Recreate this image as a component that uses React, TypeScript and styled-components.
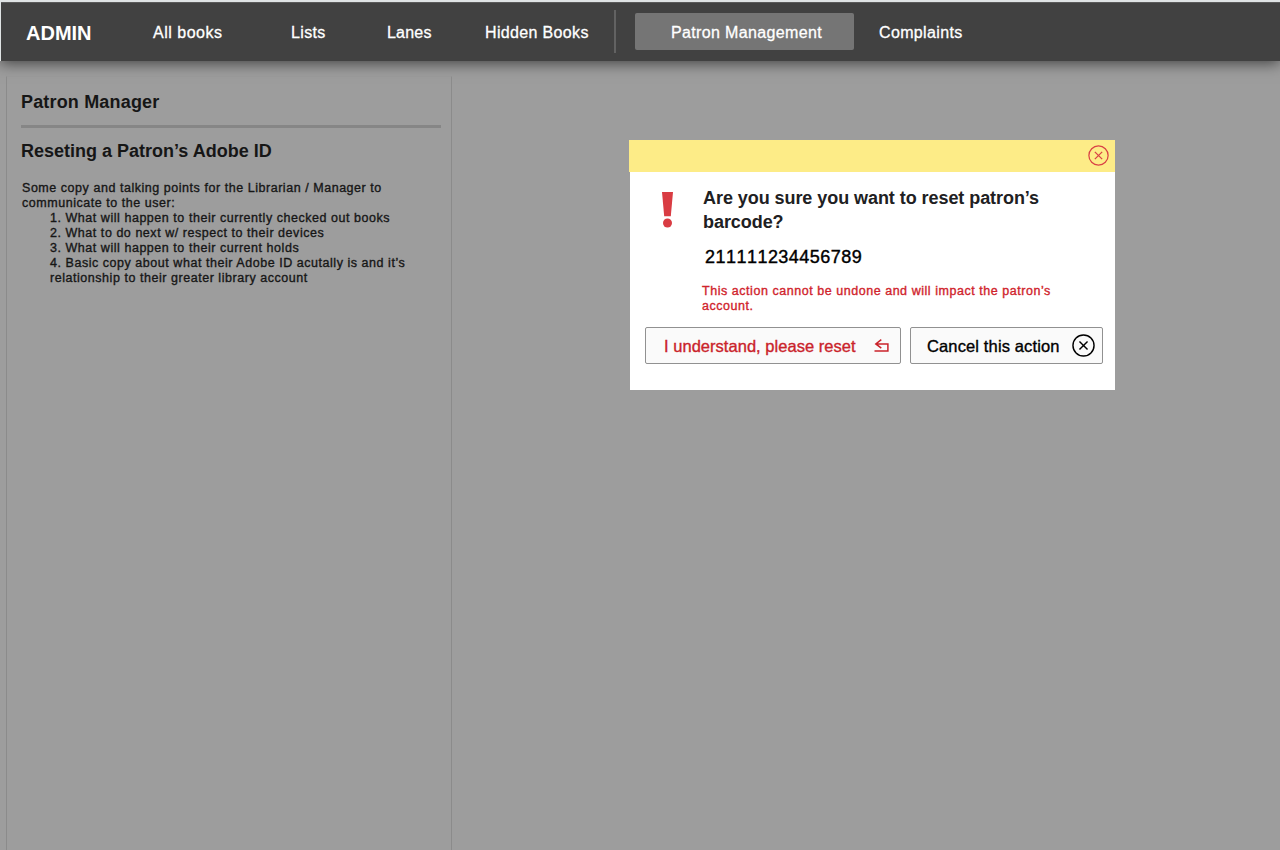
import React from "react";
import styled, { createGlobalStyle } from "styled-components";

const GlobalStyle = createGlobalStyle`
  * { box-sizing: border-box; }
  html, body { margin: 0; height: 850px; overflow: hidden; }
  body {
    background: #9d9d9d;
    color: #161616;
    font-family: "Liberation Sans", Arial, sans-serif;
  }
  h1, h2, p, ol { margin: 0; padding: 0; font-weight: inherit; }
  button { font-family: inherit; }
`;

const Page = styled.div`
  display: flex;
  flex-direction: column;
  width: 1280px;
  height: 850px;
  overflow: hidden;
`;

const TopStrip = styled.div`
  height: 61px;
  flex: none;
  padding: 2px 0 0 1px;
  background: #dfe3e4;
  box-shadow: 0 2px 14px rgba(0, 0, 0, 0.6);
`;

const Header = styled.header`
  display: flex;
  align-items: flex-start;
  height: 59px;
  border-top: 1px solid #5a5a5a;
  background: #414141;
  color: #fff;
`;

const Brand = styled.div`
  width: 127px;
  padding-left: 25px;
  font-size: 20px;
  font-weight: 700;
  line-height: 60px;
`;

const NavItem = styled.a<{ $width: number; $spacing?: number }>`
  width: ${(p) => p.$width}px;
  padding-left: 25px;
  font-size: 16px;
  line-height: 59px;
  white-space: nowrap;
  letter-spacing: ${(p) => p.$spacing ?? 0.35}px;
  -webkit-text-stroke: 0.3px currentColor;
`;

const ActiveNavItem = styled(NavItem)`
  height: 37px;
  margin-top: 10px;
  padding-left: 36px;
  border-radius: 2px;
  background: #757575;
  line-height: 39px;
`;

const Divider = styled.div`
  width: 2px;
  height: 43px;
  margin: 7px 19px 0 0;
  background: #626262;
`;

const Main = styled.main`
  display: flex;
  flex: 1;
  align-items: flex-start;
  padding-left: 6px;
`;

const Panel = styled.section`
  width: 446px;
  height: 789px;
  margin-top: 15px;
  padding: 15px 10px 0 14px;
  border: 1px solid #8b8b8b;
  border-top-color: #989898;
`;

const PanelTitle = styled.h1`
  height: 36px;
  border-bottom: 3px solid #868686;
  font-size: 18px;
  font-weight: 700;
  line-height: 20px;
  letter-spacing: 0.17px;
`;

const SectionTitle = styled.h2`
  margin-top: 13px;
  font-size: 18px;
  font-weight: 700;
  line-height: 20px;
`;

const Copy = styled.div`
  margin-top: 20px;
  padding-left: 1px;
  font-size: 12.5px;
  line-height: 15px;
  letter-spacing: 0.54px;
  white-space: nowrap;
  -webkit-text-stroke: 0.35px currentColor;
`;

const Points = styled.ol`
  padding-left: 28px;
  list-style: none;
`;

const Dialog = styled.section`
  display: flex;
  flex-direction: column;
  align-items: flex-end;
  width: 486px;
  height: 250px;
  margin: 79px 0 0 177px;
`;

const DialogBar = styled.div`
  display: flex;
  justify-content: flex-end;
  align-items: flex-start;
  width: 486px;
  height: 32px;
  padding: 5px 6px 0 0;
  background: #fdec87;
  color: #d94145;
`;

const DialogBody = styled.div`
  width: 485px;
  height: 218px;
  background: #fff;
`;

const Message = styled.div`
  display: flex;
  height: 155px;
  padding: 14px 0 0 32px;
`;

const Alert = styled.svg`
  width: 11px;
  height: 36px;
  margin: 6px 29px 0 0;
`;

const Question = styled.h2`
  padding-left: 1px;
  color: #202022;
  font-size: 18px;
  font-weight: 700;
  line-height: 24px;
  letter-spacing: -0.06px;
  white-space: nowrap;
`;

const Barcode = styled.p`
  margin-top: 12px;
  padding-left: 3px;
  color: #000;
  font-size: 18px;
  font-kerning: none;
  line-height: 22px;
  letter-spacing: 0.47px;
  -webkit-text-stroke: 0.4px currentColor;
`;

const Warning = styled.p`
  margin-top: 16px;
  color: #d0232c;
  font-size: 12.5px;
  line-height: 15px;
  letter-spacing: 0.54px;
  white-space: nowrap;
  -webkit-text-stroke: 0.35px currentColor;
`;

const Actions = styled.div`
  display: flex;
  gap: 9px;
  padding-left: 15px;
`;

const ActionButton = styled.button<{ $width: number; $danger?: boolean }>`
  display: flex;
  justify-content: space-between;
  align-items: center;
  width: ${(p) => p.$width}px;
  height: 37px;
  padding: ${(p) => (p.$danger ? "0 11px 0 18px" : "0 7px 0 16px")};
  border: 1px solid #919191;
  border-radius: 2px;
  background: #fafafa;
  color: ${(p) => (p.$danger ? "#ca232b" : "#000")};
  font-size: 16.5px;
  line-height: 35px;
  letter-spacing: ${(p) => (p.$danger ? 0.03 : 0.13)}px;
  white-space: nowrap;
  -webkit-text-stroke: 0.35px currentColor;
`;

const ButtonLabel = styled.span`
  padding-top: 2px;
`;

const CircledCross = ({ size, weight }: { size: number; weight: number }) => (
  <svg width={size} height={size} viewBox="0 0 24 24" fill="none" stroke="currentColor" strokeWidth={weight}>
    <circle cx="12" cy="12" r="11" />
    <path d="M7.8 7.8L16.2 16.2M16.2 7.8L7.8 16.2" />
  </svg>
);

const ResetArrow = () => (
  <svg width="15" height="13" viewBox="0 0 15 13" fill="none" stroke="currentColor" strokeWidth="1.5">
    <path d="M0.5 11.9H13.9V4.9H2M7.3 0.7L1.8 4.9L7.3 9.1" />
  </svg>
);

export default function App() {
  return (
    <Page>
      <GlobalStyle />
      <TopStrip>
        <Header>
          <Brand>ADMIN</Brand>
          <NavItem $width={138} $spacing={0.5}>All books</NavItem>
          <NavItem $width={96}>Lists</NavItem>
          <NavItem $width={98} $spacing={0.2}>Lanes</NavItem>
          <NavItem $width={154} $spacing={0.35}>Hidden Books</NavItem>
          <Divider />
          <ActiveNavItem $width={219}>Patron Management</ActiveNavItem>
          <NavItem $width={140}>Complaints</NavItem>
        </Header>
      </TopStrip>
      <Main>
        <Panel>
          <PanelTitle>Patron Manager</PanelTitle>
          <SectionTitle>Reseting a Patron’s Adobe ID</SectionTitle>
          <Copy>
            <p>
              Some copy and talking points for the Librarian / Manager to
              <br />
              communicate to the user:
            </p>
            <Points>
              <li>1. What will happen to their currently checked out books</li>
              <li>2. What to do next w/ respect to their devices</li>
              <li>3. What will happen to their current holds</li>
              <li>
                4. Basic copy about what their Adobe ID acutally is and it’s
                <br />
                relationship to their greater library account
              </li>
            </Points>
          </Copy>
        </Panel>
        <Dialog>
          <DialogBar>
            <CircledCross size={21} weight={1.4} />
          </DialogBar>
          <DialogBody>
            <Message>
              <Alert viewBox="0 0 11 36" fill="#d93c43">
                <path d="M0 0H11L8.8 24.3H2.2Z" />
                <circle cx="5.5" cy="31" r="4.5" />
              </Alert>
              <div>
                <Question>
                  Are you sure you want to reset patron’s
                  <br />
                  barcode?
                </Question>
                <Barcode>211111234456789</Barcode>
                <Warning>
                  This action cannot be undone and will impact the patron’s
                  <br />
                  account.
                </Warning>
              </div>
            </Message>
            <Actions>
              <ActionButton $width={256} $danger>
                <ButtonLabel>I understand, please reset</ButtonLabel>
                <ResetArrow />
              </ActionButton>
              <ActionButton $width={193}>
                <ButtonLabel>Cancel this action</ButtonLabel>
                <CircledCross size={23} weight={1.5} />
              </ActionButton>
            </Actions>
          </DialogBody>
        </Dialog>
      </Main>
    </Page>
  );
}
